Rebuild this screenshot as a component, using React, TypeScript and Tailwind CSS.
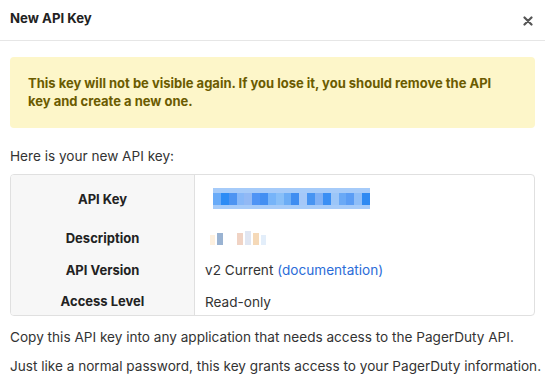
import React from 'react';

// 一行键值
const Row: React.FC<{ label: string; children: React.ReactNode; h: string }> = ({ label, children, h }) => (
  <div className={`flex ${h}`}>
    <div className="w-[184px] shrink-0 bg-[#f7f7f7] border-r border-[#e0e0e0] flex items-center justify-center font-bold text-[13px] text-[#222]">
      {label}
    </div>
    <div className="flex-1 flex items-center pl-[10px] text-[#333]">{children}</div>
  </div>
);

// 模糊的密钥块
const keyCols = ['#5aa2f8', '#2d8cf5', '#4d94f2', '#7fb3f7', '#92b9f5', '#4f94f5', '#2a7ff0', '#76b4f9', '#88bff8', '#5ea5f5', '#3f8df1', '#a5c8f8', '#2f86f0', '#7fb0f5', '#3b8ff4', '#9ac4f8', '#6aa9f6', '#5b9df5', '#8abaf7', '#2f8af2'];

const App: React.FC = () => {
  return (
    <div className="w-[545px] h-[386px] bg-white text-[13.6px] leading-[18px] text-[#333] font-['Inter',sans-serif] overflow-hidden">
      {/* 头部 */}
      <div className="flex items-center justify-between h-[41px] border-b border-[#e6e6e6] pl-[10px] pr-[12px]">
        <span className="font-bold text-[13.2px] text-[#222] -mt-[4px]">New API Key</span>
        <svg width="10" height="10" viewBox="0 0 10 10" className="mt-[2px]">
          <path d="M1.5 1.5 L8.5 8.5 M8.5 1.5 L1.5 8.5" stroke="#555" strokeWidth="2.2" strokeLinecap="round" />
        </svg>
      </div>

      <div className="px-[10px] pt-[16px]">
        {/* 警告 */}
        <div className="bg-[#fdf6c9] rounded-[4px] pl-[18px] pr-[34px] pt-[17px] pb-[18px] font-bold text-[13px] text-[#6b5b00] leading-[18px]">
          This key will not be visible again. If you lose it, you should remove the API key and create a new one.
        </div>

        <p className="mt-[19px]">Here is your new API key:</p>

        {/* 表格 */}
        <div className="mt-[9px] border border-[#e0e0e0] rounded-[4px] overflow-hidden">
          <Row label="API Key" h="h-[47px]">
            <div className="flex flex-col w-[157px] h-[21px] ml-[8px] bg-[#a6cbf9] justify-center">
              <div className="flex h-[12px]">
                {keyCols.map((c, i) => (
                  <div key={i} className="flex-1" style={{ background: c, opacity: i % 3 === 0 ? 0.8 : 1 }} />
                ))}
              </div>
            </div>
          </Row>
          <Row label="Description" h="h-[31px]">
            <div className="flex ml-[5px] h-[14px] gap-[2px] items-end">
              <div className="w-[5px] h-[10px] bg-[#fdf0df]" />
              <div className="w-[6px] h-[12px] bg-[#9ab3d2]" />
              <div className="w-[10px]" />
              <div className="w-[6px] h-[12px] bg-[#f0d3c4]" />
              <div className="w-[6px] h-[14px] bg-[#e0e6f2]" />
              <div className="w-[6px] h-[12px] bg-[#f5d9b8]" />
              <div className="w-[5px] h-[10px] bg-[#e3eefa]" />
            </div>
          </Row>
          <Row label="API Version" h="h-[33px]">
            <span>
              v2 Current <span className="text-[#2b6cd8]">(documentation)</span>
            </span>
          </Row>
          <Row label="Access Level" h="h-[29px]">
            <span className="mt-[2px]">Read-only</span>
          </Row>
        </div>

        <p className="mt-[12px] whitespace-nowrap">Copy this API key into any application that needs access to the PagerDuty API.</p>
        <p className="mt-[11px] whitespace-nowrap">Just like a normal password, this key grants access to your PagerDuty information.</p>
      </div>
    </div>
  );
};

export default App;
